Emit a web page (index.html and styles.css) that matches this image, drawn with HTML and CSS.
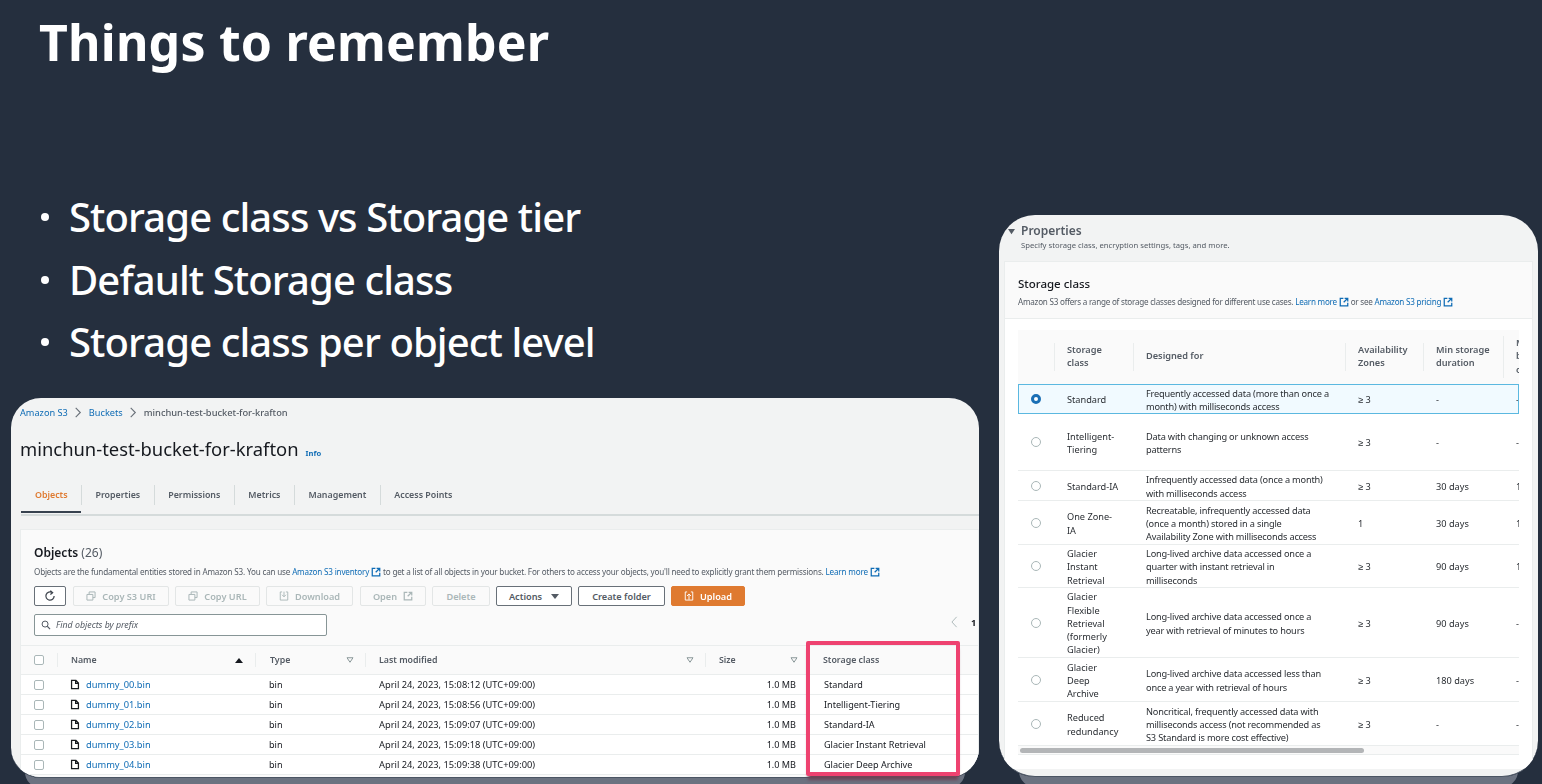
FILE: index.html
```html
<!DOCTYPE html>
<html lang="en">
<head>
    <meta charset="UTF-8">
    <meta name="viewport" content="width=device-width, initial-scale=1.0">
    <title>Things to remember</title>
    <link rel="stylesheet" href="styles.css">
</head>
<body>
    <svg class="icon-defs" width="0" height="0" aria-hidden="true">
        <symbol id="i-ext" viewBox="0 0 16 16"><path d="M7 2H2v12h12V9M9 2h5v5M14 2 7.5 8.5" fill="none" stroke="currentColor" stroke-width="2"/></symbol>
        <symbol id="i-copy" viewBox="0 0 16 16"><path d="M5 5V1.500h9.500v9H11M1.500 5.500H11v9H1.500z" fill="none" stroke="currentColor" stroke-width="1.600"/></symbol>
        <symbol id="i-file" viewBox="0 0 16 16"><path d="M2.500 1.500H9.500L13.500 5.500V14.500H2.500zM9 1.500V6h4.500" fill="none" stroke="currentColor" stroke-width="2"/></symbol>
        <symbol id="i-sort" viewBox="0 0 10 8"><path d="M1 1h8L5 7z" fill="none" stroke="currentColor" stroke-width="1.300"/></symbol>
    </svg>

    <main class="slide">
        <h1 class="slide-title">Things to remember</h1>
        <ul class="slide-points">
            <li>Storage class vs Storage tier</li>
            <li>Default Storage class</li>
            <li>Storage class per object level</li>
        </ul>

        <!-- Screenshot: bucket object list -->
        <section class="shot shot-bucket">
            <div class="shot-inner">
                <div class="crumbs">
                    <a>Amazon S3</a>
                    <svg class="crumb-sep" viewBox="0 0 8 12"><path d="M1.500 1 6.500 6l-5 5" fill="none" stroke="currentColor" stroke-width="1.200"/></svg>
                    <a>Buckets</a>
                    <svg class="crumb-sep" viewBox="0 0 8 12"><path d="M1.500 1 6.500 6l-5 5" fill="none" stroke="currentColor" stroke-width="1.200"/></svg>
                    <span class="crumb-here">minchun-test-bucket-for-krafton</span>
                </div>
                <div class="bucket-head">
                    <h2>minchun-test-bucket-for-krafton</h2>
                    <a class="info">Info</a>
                </div>
                <nav class="tabs">
                    <span class="tab active">Objects</span>
                    <span class="tab">Properties</span>
                    <span class="tab">Permissions</span>
                    <span class="tab">Metrics</span>
                    <span class="tab">Management</span>
                    <span class="tab">Access Points</span>
                </nav>

                <div class="panel objects-panel">
                    <h3 class="panel-title">Objects <span class="count">(26)</span></h3>
                    <p class="panel-desc">Objects are the fundamental entities stored in Amazon S3. You can use <a>Amazon S3 inventory</a> <svg class="ext"><use href="#i-ext"/></svg> to get a list of all objects in your bucket. For others to access your objects, you'll need to explicitly grant them permissions. <a>Learn more</a> <svg class="ext"><use href="#i-ext"/></svg></p>
                    <div class="toolbar">
                        <button class="btn btn-refresh">
                            <svg class="btn-icon" viewBox="0 0 16 16"><path d="M13.500 8A5.500 5.500 0 1 1 11 3.400M8.500 0.800 11.500 3.500 8.500 6" fill="none" stroke="currentColor" stroke-width="1.700"/></svg>
                        </button>
                        <button class="btn off b-s3"><svg class="btn-icon"><use href="#i-copy"/></svg>Copy S3 URI</button>
                        <button class="btn off b-url"><svg class="btn-icon"><use href="#i-copy"/></svg>Copy URL</button>
                        <button class="btn off b-dl">
                            <svg class="btn-icon" viewBox="0 0 16 16"><path d="M5 1.500H2v13h12v-13h-3M8 1v8M4.800 6 8 9.300 11.200 6" fill="none" stroke="currentColor" stroke-width="1.500"/></svg>
                            Download
                        </button>
                        <button class="btn off b-open">Open<svg class="btn-icon"><use href="#i-ext"/></svg></button>
                        <button class="btn off b-del">Delete</button>
                        <button class="btn b-act">Actions<span class="caret"></span></button>
                        <button class="btn b-new">Create folder</button>
                        <button class="btn primary">
                            <svg class="btn-icon" viewBox="0 0 16 16"><path d="M5 1.500H2v13h12v-13h-3M8 14V5M4.800 8 8 4.700 11.200 8" fill="none" stroke="currentColor" stroke-width="1.500"/></svg>
                            Upload
                        </button>
                    </div>
                    <div class="search-row">
                        <div class="search">
                            <svg class="search-icon" viewBox="0 0 16 16"><circle cx="6.500" cy="6.500" r="4.800" fill="none" stroke="currentColor" stroke-width="1.600"/><path d="m10 10 4.500 4.500" stroke="currentColor" stroke-width="1.800"/></svg>
                            <span>Find objects by prefix</span>
                        </div>
                        <div class="pager">
                            <svg class="pager-prev" viewBox="0 0 8 14"><path d="M6.500 1 1 7l5.500 6" fill="none" stroke="currentColor" stroke-width="1.100"/></svg>
                            <b>1</b>
                        </div>
                    </div>

                    <div class="obj-table">
                        <div class="obj-row obj-head">
                            <div class="cell"><i class="check"></i></div>
                            <div class="cell col">Name<span class="sort-up"></span></div>
                            <div class="cell col">Type<svg class="sort"><use href="#i-sort"/></svg></div>
                            <div class="cell col">Last modified<svg class="sort"><use href="#i-sort"/></svg></div>
                            <div class="cell col">Size<svg class="sort"><use href="#i-sort"/></svg></div>
                            <div class="cell col col-last">Storage class</div>
                        </div>
                        <div class="obj-row">
                            <div class="cell"><i class="check"></i></div>
                            <div class="cell name"><svg class="file"><use href="#i-file"/></svg><a>dummy_00.bin</a></div>
                            <div class="cell">bin</div>
                            <div class="cell date">April 24, 2023, 15:08:12 (UTC+09:00)</div>
                            <div class="cell size">1.0 MB</div>
                            <div class="cell class-cell">Standard</div>
                        </div>
                        <div class="obj-row">
                            <div class="cell"><i class="check"></i></div>
                            <div class="cell name"><svg class="file"><use href="#i-file"/></svg><a>dummy_01.bin</a></div>
                            <div class="cell">bin</div>
                            <div class="cell date">April 24, 2023, 15:08:56 (UTC+09:00)</div>
                            <div class="cell size">1.0 MB</div>
                            <div class="cell class-cell">Intelligent-Tiering</div>
                        </div>
                        <div class="obj-row">
                            <div class="cell"><i class="check"></i></div>
                            <div class="cell name"><svg class="file"><use href="#i-file"/></svg><a>dummy_02.bin</a></div>
                            <div class="cell">bin</div>
                            <div class="cell date">April 24, 2023, 15:09:07 (UTC+09:00)</div>
                            <div class="cell size">1.0 MB</div>
                            <div class="cell class-cell">Standard-IA</div>
                        </div>
                        <div class="obj-row">
                            <div class="cell"><i class="check"></i></div>
                            <div class="cell name"><svg class="file"><use href="#i-file"/></svg><a>dummy_03.bin</a></div>
                            <div class="cell">bin</div>
                            <div class="cell date">April 24, 2023, 15:09:18 (UTC+09:00)</div>
                            <div class="cell size">1.0 MB</div>
                            <div class="cell class-cell">Glacier Instant Retrieval</div>
                        </div>
                        <div class="obj-row">
                            <div class="cell"><i class="check"></i></div>
                            <div class="cell name"><svg class="file"><use href="#i-file"/></svg><a>dummy_04.bin</a></div>
                            <div class="cell">bin</div>
                            <div class="cell date">April 24, 2023, 15:09:38 (UTC+09:00)</div>
                            <div class="cell size">1.0 MB</div>
                            <div class="cell class-cell">Glacier Deep Archive</div>
                        </div>
                    </div>
                </div>
            </div>
            <div class="highlight"></div>
        </section>

        <!-- Screenshot: storage class picker -->
        <section class="shot shot-props">
            <div class="shot-inner">
                <svg class="props-caret" viewBox="0 0 8 8"><path d="M0 1h8L4 7z" fill="currentColor"/></svg>
                <div class="props-head">
                    <h3>Properties</h3>
                    <p>Specify storage class, encryption settings, tags, and more.</p>
                </div>
                <div class="panel props-panel">
                    <div class="props-intro">
                        <h3 class="panel-title">Storage class</h3>
                        <p class="panel-desc">Amazon S3 offers a range of storage classes designed for different use cases. <a>Learn more</a> <svg class="ext"><use href="#i-ext"/></svg> or see <a>Amazon S3 pricing</a> <svg class="ext"><use href="#i-ext"/></svg></p>
                    </div>
                    <div class="props-body">
                        <div class="cls-table">
                            <div class="cls-row cls-head">
                                <div class="cell"></div>
                                <div class="cell col">Storage<br>class</div>
                                <div class="cell col">Designed for</div>
                                <div class="cell col">Availability<br>Zones</div>
                                <div class="cell col">Min storage<br>duration</div>
                                <div class="cell col">Min<br>billable<br>object</div>
                            </div>
                            <div class="cls-row selected h30">
                                <div class="cell"><i class="radio on"></i></div>
                                <div class="cell">Standard</div>
                                <div class="cell">Frequently accessed data (more than once a<br>month) with milliseconds access</div>
                                <div class="cell">≥ 3</div>
                                <div class="cell">-</div>
                                <div class="cell">-</div>
                            </div>
                            <div class="cls-row h57">
                                <div class="cell"><i class="radio"></i></div>
                                <div class="cell">Intelligent-<br>Tiering</div>
                                <div class="cell">Data with changing or unknown access<br>patterns</div>
                                <div class="cell">≥ 3</div>
                                <div class="cell">-</div>
                                <div class="cell">-</div>
                            </div>
                            <div class="cls-row h30">
                                <div class="cell"><i class="radio"></i></div>
                                <div class="cell">Standard-IA</div>
                                <div class="cell">Infrequently accessed data (once a month)<br>with milliseconds access</div>
                                <div class="cell">≥ 3</div>
                                <div class="cell">30 days</div>
                                <div class="cell">1</div>
                            </div>
                            <div class="cls-row h44">
                                <div class="cell"><i class="radio"></i></div>
                                <div class="cell">One Zone-<br>IA</div>
                                <div class="cell">Recreatable, infrequently accessed data<br>(once a month) stored in a single<br>Availability Zone with milliseconds access</div>
                                <div class="cell">1</div>
                                <div class="cell">30 days</div>
                                <div class="cell">1</div>
                            </div>
                            <div class="cls-row h43">
                                <div class="cell"><i class="radio"></i></div>
                                <div class="cell">Glacier<br>Instant<br>Retrieval</div>
                                <div class="cell">Long-lived archive data accessed once a<br>quarter with instant retrieval in<br>milliseconds</div>
                                <div class="cell">≥ 3</div>
                                <div class="cell">90 days</div>
                                <div class="cell">1</div>
                            </div>
                            <div class="cls-row h70">
                                <div class="cell"><i class="radio"></i></div>
                                <div class="cell">Glacier<br>Flexible<br>Retrieval<br>(formerly<br>Glacier)</div>
                                <div class="cell">Long-lived archive data accessed once a<br>year with retrieval of minutes to hours</div>
                                <div class="cell">≥ 3</div>
                                <div class="cell">90 days</div>
                                <div class="cell">-</div>
                            </div>
                            <div class="cls-row h44">
                                <div class="cell"><i class="radio"></i></div>
                                <div class="cell">Glacier<br>Deep<br>Archive</div>
                                <div class="cell">Long-lived archive data accessed less than<br>once a year with retrieval of hours</div>
                                <div class="cell">≥ 3</div>
                                <div class="cell">180 days</div>
                                <div class="cell">-</div>
                            </div>
                            <div class="cls-row h43 last">
                                <div class="cell"><i class="radio"></i></div>
                                <div class="cell">Reduced<br>redundancy</div>
                                <div class="cell">Noncritical, frequently accessed data with<br>milliseconds access (not recommended as<br>S3 Standard is more cost effective)</div>
                                <div class="cell">≥ 3</div>
                                <div class="cell">-</div>
                                <div class="cell">-</div>
                            </div>
                        </div>
                        <div class="scroll-track"><div class="scroll-thumb"></div></div>
                    </div>
                </div>
            </div>
        </section>
    </main>
</body>
</html>
```

FILE: styles.css
```css
* {
    box-sizing: border-box;
}

body {
    margin: 0;
    background-color: #252f3e;
    font-family: "Noto Sans", Arial, sans-serif;
    overflow: hidden;
}

.icon-defs {
    position: absolute;
}

.slide {
    position: relative;
    width: 1542px;
    height: 784px;
    overflow: hidden;
    padding: 8px 0 0 39px;
    color: #fff;
}

.slide-title {
    margin: 0;
    font-size: 50px;
    line-height: 68px;
    font-weight: 700;
    letter-spacing: 0.2px;
}

.slide-points {
    margin: 110px 0 0;
    padding: 0;
    list-style: none;
    font-size: 40px;
    font-weight: 500;
    line-height: 62.5px;
    letter-spacing: -0.9px;
}

.slide-points li {
    display: flex;
    align-items: center;
    gap: 20px;
    padding-left: 2px;
}

.slide-points li::before {
    content: "";
    width: 8px;
    height: 8px;
    border-radius: 50%;
    background: #fff;
    flex: none;
}

/* Screenshots sit on the slide like pictures */
.shot {
    position: absolute;
    color: #16191f;
    font-size: 9.2px;
    border-radius: 30px;
}

.shot-bucket {
    left: 11px;
    top: 398px;
    width: 968px;
    height: 380px;
    box-shadow: 0 24px 0 -14px #6b7280;
}

.shot-props {
    left: 999px;
    top: 215px;
    width: 539px;
    height: 562px;
    border-radius: 36px;
    box-shadow: 0 30px 0 -20px #6b7280;
}

.shot-inner {
    height: 100%;
    overflow: hidden;
    border-radius: inherit;
    background: #f2f3f3;
    border-bottom: 1px solid #4b5563;
    filter: blur(0.3px);
}

.shot-props .shot-inner {
    position: relative;
}

a {
    color: #0f6cb5;
}

.highlight {
    position: absolute;
    left: 795px;
    top: 243px;
    width: 154px;
    height: 135px;
    border: 4px solid #ee4270;
    border-radius: 2px;
    box-shadow: 0 6px 3px -2px #6e4658;
}

/* Bucket header */
.crumbs {
    display: flex;
    align-items: center;
    height: 14px;
    margin: 7px 0 0 9px;
    font-size: 9.2px;
    color: #545b64;
}

.crumb-sep {
    width: 8px;
    height: 11px;
    margin: 0 6.5px;
    color: #687078;
}

.crumb-here {
    font-size: 9.300px;
    font-weight: 500;
}

.bucket-head {
    display: flex;
    align-items: baseline;
    margin: 16px 0 0 9px;
    height: 28px;
}

.bucket-head h2 {
    margin: 0;
    font-size: 18.4px;
    line-height: 28px;
    font-weight: 400;
    color: #16191f;
}

.info {
    margin-left: 7px;
    font-size: 7.6px;
    font-weight: 700;
}

.tabs {
    display: flex;
    align-items: center;
    height: 35px;
    margin: 18px 0 0 10px;
    padding-bottom: 5px;
    border-bottom: 2px solid #d5dbdb;
    color: #545b64;
    font-size: 8.85px;
    font-weight: 600;
}

.tab {
    position: relative;
    display: flex;
    align-items: center;
    height: 20px;
    padding: 0 13.5px;
    border-left: 1px solid #d5dbdb;
}

.tab.active {
    width: 60px;
    padding: 0 14px;
    border-left: 0;
    color: #df7a30;
}

.tab.active::after {
    content: "";
    position: absolute;
    left: 0;
    right: 0;
    bottom: -8px;
    height: 2px;
    background: #37424f;
}

/* Panels */
.panel {
    background: #fafafa;
    border: 1px solid #eaeded;
    border-bottom: 0;
}

.objects-panel {
    margin: 13px 0 0 9px;
    height: 260px;
}

.panel-title {
    margin: 0;
    font-size: 12px;
    line-height: 16px;
    font-weight: 600;
    color: #16191f;
}

.count {
    font-weight: 400;
    color: #545b64;
}

.panel-desc {
    margin: 5px 0 0;
    font-size: 8.1px;
    line-height: 12px;
    letter-spacing: -0.175px;
    color: #545b64;
    white-space: nowrap;
}

.ext {
    width: 10px;
    height: 10px;
    vertical-align: -2px;
    color: #0f6cb5;
}

.objects-panel .panel-title {
    margin: 15px 0 0 13px;
}

.objects-panel .panel-desc {
    margin-left: 13px;
}

/* Toolbar */
.toolbar {
    display: flex;
    gap: 6px;
    margin: 8px 0 0 13px;
}

.btn {
    display: flex;
    align-items: center;
    justify-content: center;
    gap: 6px;
    height: 20px;
    padding: 0;
    border: 1px solid #687078;
    border-radius: 2px;
    background: #fff;
    color: #545b64;
    font-family: inherit;
    font-size: 9.2px;
    font-weight: 600;
}

.btn-icon {
    width: 10px;
    height: 10px;
    flex: none;
}

.btn-refresh {
    width: 32px;
}

.btn-refresh .btn-icon {
    width: 12px;
    height: 12px;
    color: #414750;
}

.btn.off {
    border-color: #e3e6e6;
    color: #aab7b8;
    background: #fafafa;
}

.b-s3 { width: 96px; margin-left: 1px; }
.b-url { width: 85px; }
.b-dl { width: 87px; }
.b-open { width: 66px; margin-left: 1px; }
.b-del { width: 58px; }
.b-act { width: 76px; gap: 9px; }
.b-new { width: 87px; }

.caret {
    width: 0;
    height: 0;
    border: 4px solid transparent;
    border-top: 5px solid #545b64;
    border-bottom: 0;
}

.btn.primary {
    width: 74px;
    border-color: #df7a30;
    background: #df7a30;
    color: #fff;
}

/* Search */
.search-row {
    display: flex;
    align-items: center;
    margin: 8px 0 0 13px;
    height: 22px;
}

.search {
    display: flex;
    align-items: center;
    gap: 5px;
    width: 293px;
    height: 22px;
    padding-left: 6px;
    border: 1px solid #879596;
    border-radius: 2px;
    background: #fff;
    font-size: 8.8px;
    font-style: italic;
    color: #545b64;
}

.search-icon {
    width: 10px;
    height: 10px;
    color: #545b64;
}

.pager {
    display: flex;
    align-items: center;
    gap: 13px;
    margin: -6px 0 0 624px;
    font-size: 9.2px;
}

.pager-prev {
    width: 7px;
    height: 12px;
    color: #aab7b8;
}

/* Object table */
.obj-table {
    margin-top: 9px;
}

.obj-row {
    display: grid;
    grid-template-columns: 36px 198px 110px 340px 104px 1fr;
    height: 20px;
    align-items: center;
    background: #fff;
    border-bottom: 1px solid #eaeded;
    font-size: 9.1px;
    color: #16191f;
}

.obj-row .cell {
    display: flex;
    align-items: center;
    padding-left: 14px;
}

.obj-row .cell:first-child,
.obj-row .name {
    padding-left: 13px;
}

.obj-head {
    height: 30px;
    background: #fafafa;
    border-top: 1px solid #eaeded;
    font-size: 8.8px;
    font-weight: 600;
    color: #545b64;
}

.obj-head .col {
    position: relative;
    height: 14px;
    padding-left: 13px;
    border-left: 1px solid #eaeded;
}

.obj-head .col:nth-child(3) {
    padding-left: 14px;
}

.obj-head .col-last {
    padding-left: 14px;
    border-left: 0;
}

.sort,
.sort-up {
    margin-left: auto;
    margin-right: 11px;
}

.sort {
    width: 8px;
    height: 6px;
    color: #879596;
}

.sort-up {
    width: 0;
    height: 0;
    margin-right: 12px;
    border: 4px solid transparent;
    border-top: 0;
    border-bottom: 5px solid #16191f;
}

.check {
    display: block;
    width: 10px;
    height: 10px;
    border: 1px solid #aab7b8;
    border-radius: 2px;
    background: #fff;
}

.name {
    gap: 6px;
}

.name a {
    font-size: 9.3px;
}

.file {
    width: 10px;
    height: 11px;
    color: #16191f;
    flex: none;
}

.date {
    font-size: 9.300px;
}

.size {
    justify-content: flex-end;
    padding-right: 13px;
}

.obj-row .class-cell {
    padding-left: 15px;
}

/* Properties screenshot */
.props-caret {
    position: absolute;
    left: 9px;
    top: 13px;
    width: 7px;
    height: 7px;
    color: #545b64;
}

.props-head {
    height: 46px;
    padding: 7px 0 0 22px;
}

.props-head h3 {
    margin: 0;
    font-size: 12px;
    line-height: 18px;
    font-weight: 600;
    color: #545b64;
}

.props-head p {
    margin: 0;
    font-size: 7.7px;
    line-height: 11px;
    color: #545b64;
}

.props-panel {
    margin: 0 5px;
    height: 508px;
    border-bottom: 1px solid #aab7b8;
}

.props-intro {
    height: 57px;
    padding: 14px 0 0 13px;
    border-bottom: 1px solid #eaeded;
}

.props-intro .panel-title {
    font-size: 11.500px;
    font-weight: 500;
}

.props-intro .panel-desc {
    margin-top: 4px;
    letter-spacing: -0.23px;
}

.props-body {
    height: 450px;
    padding: 11px 13px 0;
    background: #fff;
}

.cls-table {
    overflow: hidden;
}

.cls-row {
    display: grid;
    grid-template-columns: 36px 79px 212px 78px 80px 1fr;
    align-items: center;
    border-bottom: 1px solid #eaeded;
    background: #fff;
    font-size: 9.2px;
    line-height: 13.300px;
    color: #2a2e33;
}

.cls-row .cell {
    padding: 2px 0 0 13px;
    white-space: nowrap;
}

.cls-row .cell:first-child {
    padding-top: 0;
}

.cls-row .cell:nth-child(3) {
    letter-spacing: -0.17px;
}

.cls-row .cell:last-child {
    overflow: hidden;
}

.cls-head {
    height: 54px;
    background: #fafafa;
    border-bottom: 0;
    font-weight: 600;
    color: #545b64;
}

.cls-head .col {
    min-height: 28px;
    padding: 0 0 2px 12px;
    border-left: 1px solid #eaeded;
    display: flex;
    align-items: center;
}

.cls-head .col:nth-child(3) {
    letter-spacing: 0;
}

.cls-head .col:last-child {
    min-height: 40px;
}

.cls-row.selected {
    background: #f1faff;
    outline: 1px solid #5bb8e0;
    outline-offset: -1px;
    border-bottom: 0;
}

.cls-row.last {
    border-bottom: 0;
}

.h30 { height: 30px; }
.h43 { height: 43px; }
.h44 { height: 44px; }
.h57 { height: 57px; }
.h70 { height: 70px; }

.radio {
    display: block;
    width: 10px;
    height: 10px;
    border: 1px solid #aab7b8;
    border-radius: 50%;
    background: #fff;
}

.radio.on {
    border: 3px solid #1a6fb5;
}

.scroll-track {
    display: flex;
    align-items: center;
    height: 10px;
    padding-left: 2px;
    background: #fafafa;
    border-top: 1px solid #eaeded;
    border-bottom: 1px solid #eaeded;
}

.scroll-thumb {
    width: 344px;
    height: 5px;
    border-radius: 3px;
    background: #b3b5b7;
}
```
